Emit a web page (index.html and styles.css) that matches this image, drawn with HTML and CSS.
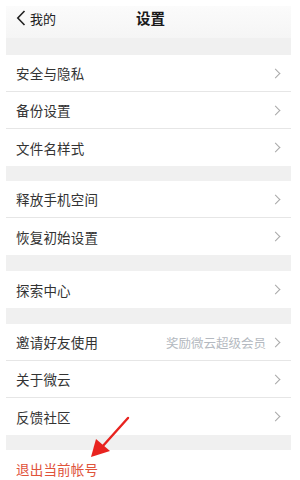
FILE: index.html
```html
<!DOCTYPE html>
<html lang="zh">
<head>
<meta charset="utf-8">
<link rel="stylesheet" href="styles.css">
</head>
<body>
<div class="screen">
  <div class="header">
    <div class="back">
      <svg class="back-icon" width="10" height="16" viewBox="0 0 10 16"><path d="M8.5 1 L1.8 8 L8.5 15" fill="none" stroke="#222" stroke-width="1.6"/></svg>
      <span>我的</span>
    </div>
    <div class="title">设置</div>
  </div>
  <div class="band band-top"></div>
  <div class="group">
    <div class="row"><span class="label">安全与隐私</span><span class="chev"></span></div>
    <div class="row"><span class="label">备份设置</span><span class="chev"></span></div>
    <div class="row last"><span class="label">文件名样式</span><span class="chev"></span></div>
  </div>
  <div class="band"></div>
  <div class="group">
    <div class="row"><span class="label">释放手机空间</span><span class="chev"></span></div>
    <div class="row last"><span class="label">恢复初始设置</span><span class="chev"></span></div>
  </div>
  <div class="band b16"></div>
  <div class="group">
    <div class="row last"><span class="label">探索中心</span><span class="chev"></span></div>
  </div>
  <div class="band b16"></div>
  <div class="group">
    <div class="row"><span class="label">邀请好友使用</span><span class="extra">奖励微云超级会员</span><span class="chev"></span></div>
    <div class="row"><span class="label">关于微云</span><span class="chev"></span></div>
    <div class="row last"><span class="label">反馈社区</span><span class="chev"></span></div>
  </div>
  <div class="band"></div>
  <div class="group">
    <div class="row last"><span class="label logout">退出当前帐号</span></div>
  </div>
  <svg class="arrow" width="50" height="50" viewBox="0 0 50 50">
    <path d="M48 8 L22 37" fill="none" stroke="#e8231f" stroke-width="2.4" stroke-linecap="round"/>
    <path d="M11 47 L16 29 L30 41 Z" fill="#e8231f"/>
  </svg>
</div>
</body>
</html>
```
FILE: styles.css
```css
html, body {
  margin: 0;
  padding: 0;
  background: #ffffff;
}
body {
  font-family: "Noto Sans CJK SC", "Noto Sans", sans-serif;
  overflow: hidden;
  height: 480px;
}
.screen {
  position: relative;
  width: 285px;
  margin: 6px 0 0 6px;
}
.header {
  height: 32px;
  box-sizing: border-box;
  padding-bottom: 8px;
  background: linear-gradient(#fbfbfb, #f5f5f5);
  position: relative;
  display: flex;
  align-items: center;
}
.back {
  display: flex;
  align-items: center;
  padding-left: 10px;
  font-size: 13px;
  color: #222;
  gap: 4px;
}
.back-icon {
  display: block;
}
.title {
  position: absolute;
  left: 0;
  right: 0;
  top: 0;
  height: 24px;
  line-height: 24px;
  text-align: center;
  font-size: 14.5px;
  font-weight: 700;
  color: #1a1a1a;
  pointer-events: none;
  margin-left: 4px;
}
.band {
  height: 15px;
  background: #f0f0f0;
}
.band-top {
  height: 17px;
}
.b16 {
  height: 16px;
}
.row {
  height: 36px;
  border-bottom: 1px solid #e6e6e6;
  display: flex;
  align-items: center;
  padding: 0 9px 0 10px;
}
.row.last {
  border-bottom: none;
  height: 37px;
}
.label {
  flex: 1;
  font-size: 13.5px;
  color: #333;
  letter-spacing: 0.2px;
}
.extra {
  font-size: 12.5px;
  color: #b4b9c0;
  margin-right: 6px;
}
.chev {
  width: 6px;
  height: 6px;
  border-top: 1px solid #a8a8a8;
  border-right: 1px solid #a8a8a8;
  transform: rotate(45deg);
  margin-right: 3px;
}
.logout {
  color: #e0533a;
}
.arrow {
  position: absolute;
  left: 74px;
  top: 404px;
}
```
